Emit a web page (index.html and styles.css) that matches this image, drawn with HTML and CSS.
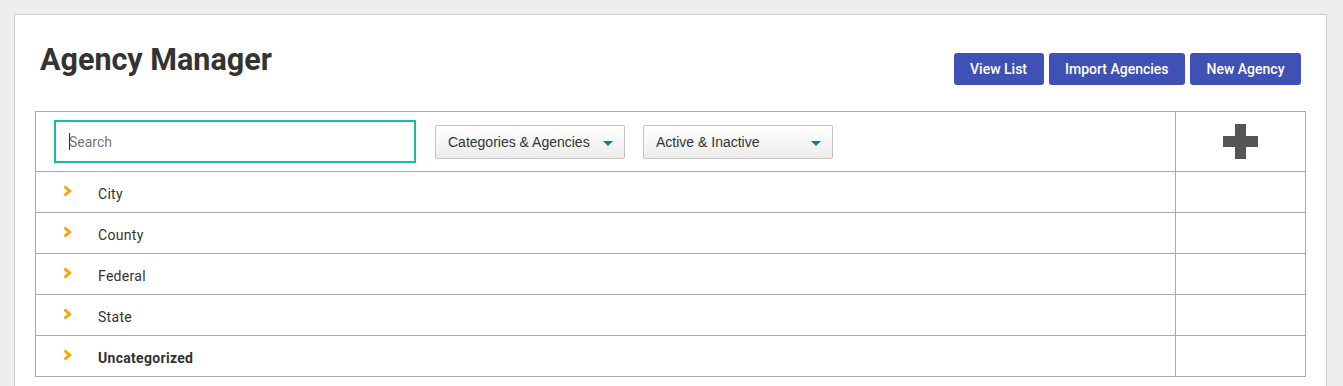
FILE: index.html
```html
<!DOCTYPE html>
<html>
<head>
    <meta charset="UTF-8">
    <title>Agency Manager</title>
    <link rel="stylesheet" href="styles.css">
</head>
<body>
    <div class="panel">
        <div class="page-head">
            <h1>Agency Manager</h1>
            <div class="actions">
                <button>View List</button>
                <button>Import Agencies</button>
                <button>New Agency</button>
            </div>
        </div>

        <div class="tree">
            <div class="tree-row tree-head">
                <div class="cell main">
                    <div class="search-box">
                        <input type="text" placeholder="Search">
                        <span class="caret-line"></span>
                    </div>
                    <div class="select">Categories &amp; Agencies<span class="arrow"></span></div>
                    <div class="select">Active &amp; Inactive<span class="arrow"></span></div>
                </div>
                <div class="cell side">
                    <svg width="35" height="35" viewBox="0 0 35 35">
                        <rect x="12" y="0" width="11" height="35" fill="#555"/>
                        <rect x="0" y="12" width="35" height="11" fill="#555"/>
                    </svg>
                </div>
            </div>
            <div class="tree-row">
                <div class="cell main"><svg class="chev" width="9" height="12" viewBox="0 0 9 12"><polyline points="1.5,1.5 6.5,6 1.5,10.5" fill="none" stroke="#ffa200" stroke-width="3"/></svg>City</div>
                <div class="cell side"></div>
            </div>
            <div class="tree-row">
                <div class="cell main"><svg class="chev" width="9" height="12" viewBox="0 0 9 12"><polyline points="1.5,1.5 6.5,6 1.5,10.5" fill="none" stroke="#ffa200" stroke-width="3"/></svg>County</div>
                <div class="cell side"></div>
            </div>
            <div class="tree-row">
                <div class="cell main"><svg class="chev" width="9" height="12" viewBox="0 0 9 12"><polyline points="1.5,1.5 6.5,6 1.5,10.5" fill="none" stroke="#ffa200" stroke-width="3"/></svg>Federal</div>
                <div class="cell side"></div>
            </div>
            <div class="tree-row">
                <div class="cell main"><svg class="chev" width="9" height="12" viewBox="0 0 9 12"><polyline points="1.5,1.5 6.5,6 1.5,10.5" fill="none" stroke="#ffa200" stroke-width="3"/></svg>State</div>
                <div class="cell side"></div>
            </div>
            <div class="tree-row">
                <div class="cell main bold"><svg class="chev" width="9" height="12" viewBox="0 0 9 12"><polyline points="1.5,1.5 6.5,6 1.5,10.5" fill="none" stroke="#ffa200" stroke-width="3"/></svg>Uncategorized</div>
                <div class="cell side"></div>
            </div>
        </div>
    </div>
</body>
</html>
```

FILE: styles.css
```css
body {
    margin: 0;
    padding: 14px 16px 0 14px;
    background: #eeeeee;
    font-family: Roboto, "Liberation Sans", sans-serif;
    color: #333;
}
.panel {
    background: #fff;
    border: 1px solid #cccccc;
    padding: 0 20px 20px 20px;
}
.page-head {
    display: flex;
    justify-content: space-between;
    align-items: flex-start;
    height: 96px;
}
.page-head h1 {
    margin: 28px 0 0 5px;
    font-size: 30.5px;
    line-height: 34px;
    font-weight: 700;
    color: #333;
}
.actions {
    display: flex;
    gap: 5px;
    margin: 38px 5px 0 0;
}
.actions button {
    height: 32px;
    padding: 0 16.5px;
    background: #3f51b5;
    color: #fff;
    border: none;
    border-radius: 3px;
    font-family: Roboto, sans-serif;
    font-size: 14px;
    font-weight: 500;
    cursor: pointer;
}
.tree {
    border: 1px solid #aaaaaa;
    border-bottom: none;
}
.tree-row {
    display: grid;
    grid-template-columns: 1fr 129px;
    height: 40px;
    border-bottom: 1px solid #aaaaaa;
}
.tree-row.tree-head {
    height: 59px;
}
.cell.main {
    display: flex;
    align-items: center;
    border-right: 1px solid #aaaaaa;
    padding: 3px 0 0 27px;
    font-size: 14px;
    letter-spacing: 0.3px;
}
.tree-head .cell.main {
    padding: 0 0 0 18px;
    letter-spacing: 0;
}
.cell.bold {
    font-weight: 700;
}
.cell.side {
    display: flex;
    justify-content: center;
    align-items: center;
}
.search-box {
    position: relative;
    width: 362px;
    height: 43px;
    margin-right: 19px;
}
.search-box input {
    box-sizing: border-box;
    width: 100%;
    height: 100%;
    border: 2px solid #14bfa1;
    padding: 0 0 0 13px;
    font-family: Roboto, sans-serif;
    font-size: 14px;
    color: #333;
    outline: none;
}
.search-box input::placeholder {
    color: #777;
}
.caret-line {
    position: absolute;
    left: 15px;
    top: 13px;
    width: 1px;
    height: 17px;
    background: #333;
}
.select {
    box-sizing: border-box;
    position: relative;
    width: 190px;
    height: 34px;
    margin-right: 18px;
    padding-left: 12px;
    display: flex;
    align-items: center;
    border: 1px solid #c4c4c4;
    border-radius: 2px;
    background: linear-gradient(#ffffff, #ececec);
    font-family: "Liberation Sans", Arial, sans-serif;
    font-size: 14px;
    color: #333;
}
.arrow {
    position: absolute;
    right: 11px;
    top: 15px;
    width: 0;
    height: 0;
    border-left: 5px solid transparent;
    border-right: 5px solid transparent;
    border-top: 5px solid #0a78bd;
}
.chev {
    flex: none;
    margin: -6px 26px 0 0;
}
```
